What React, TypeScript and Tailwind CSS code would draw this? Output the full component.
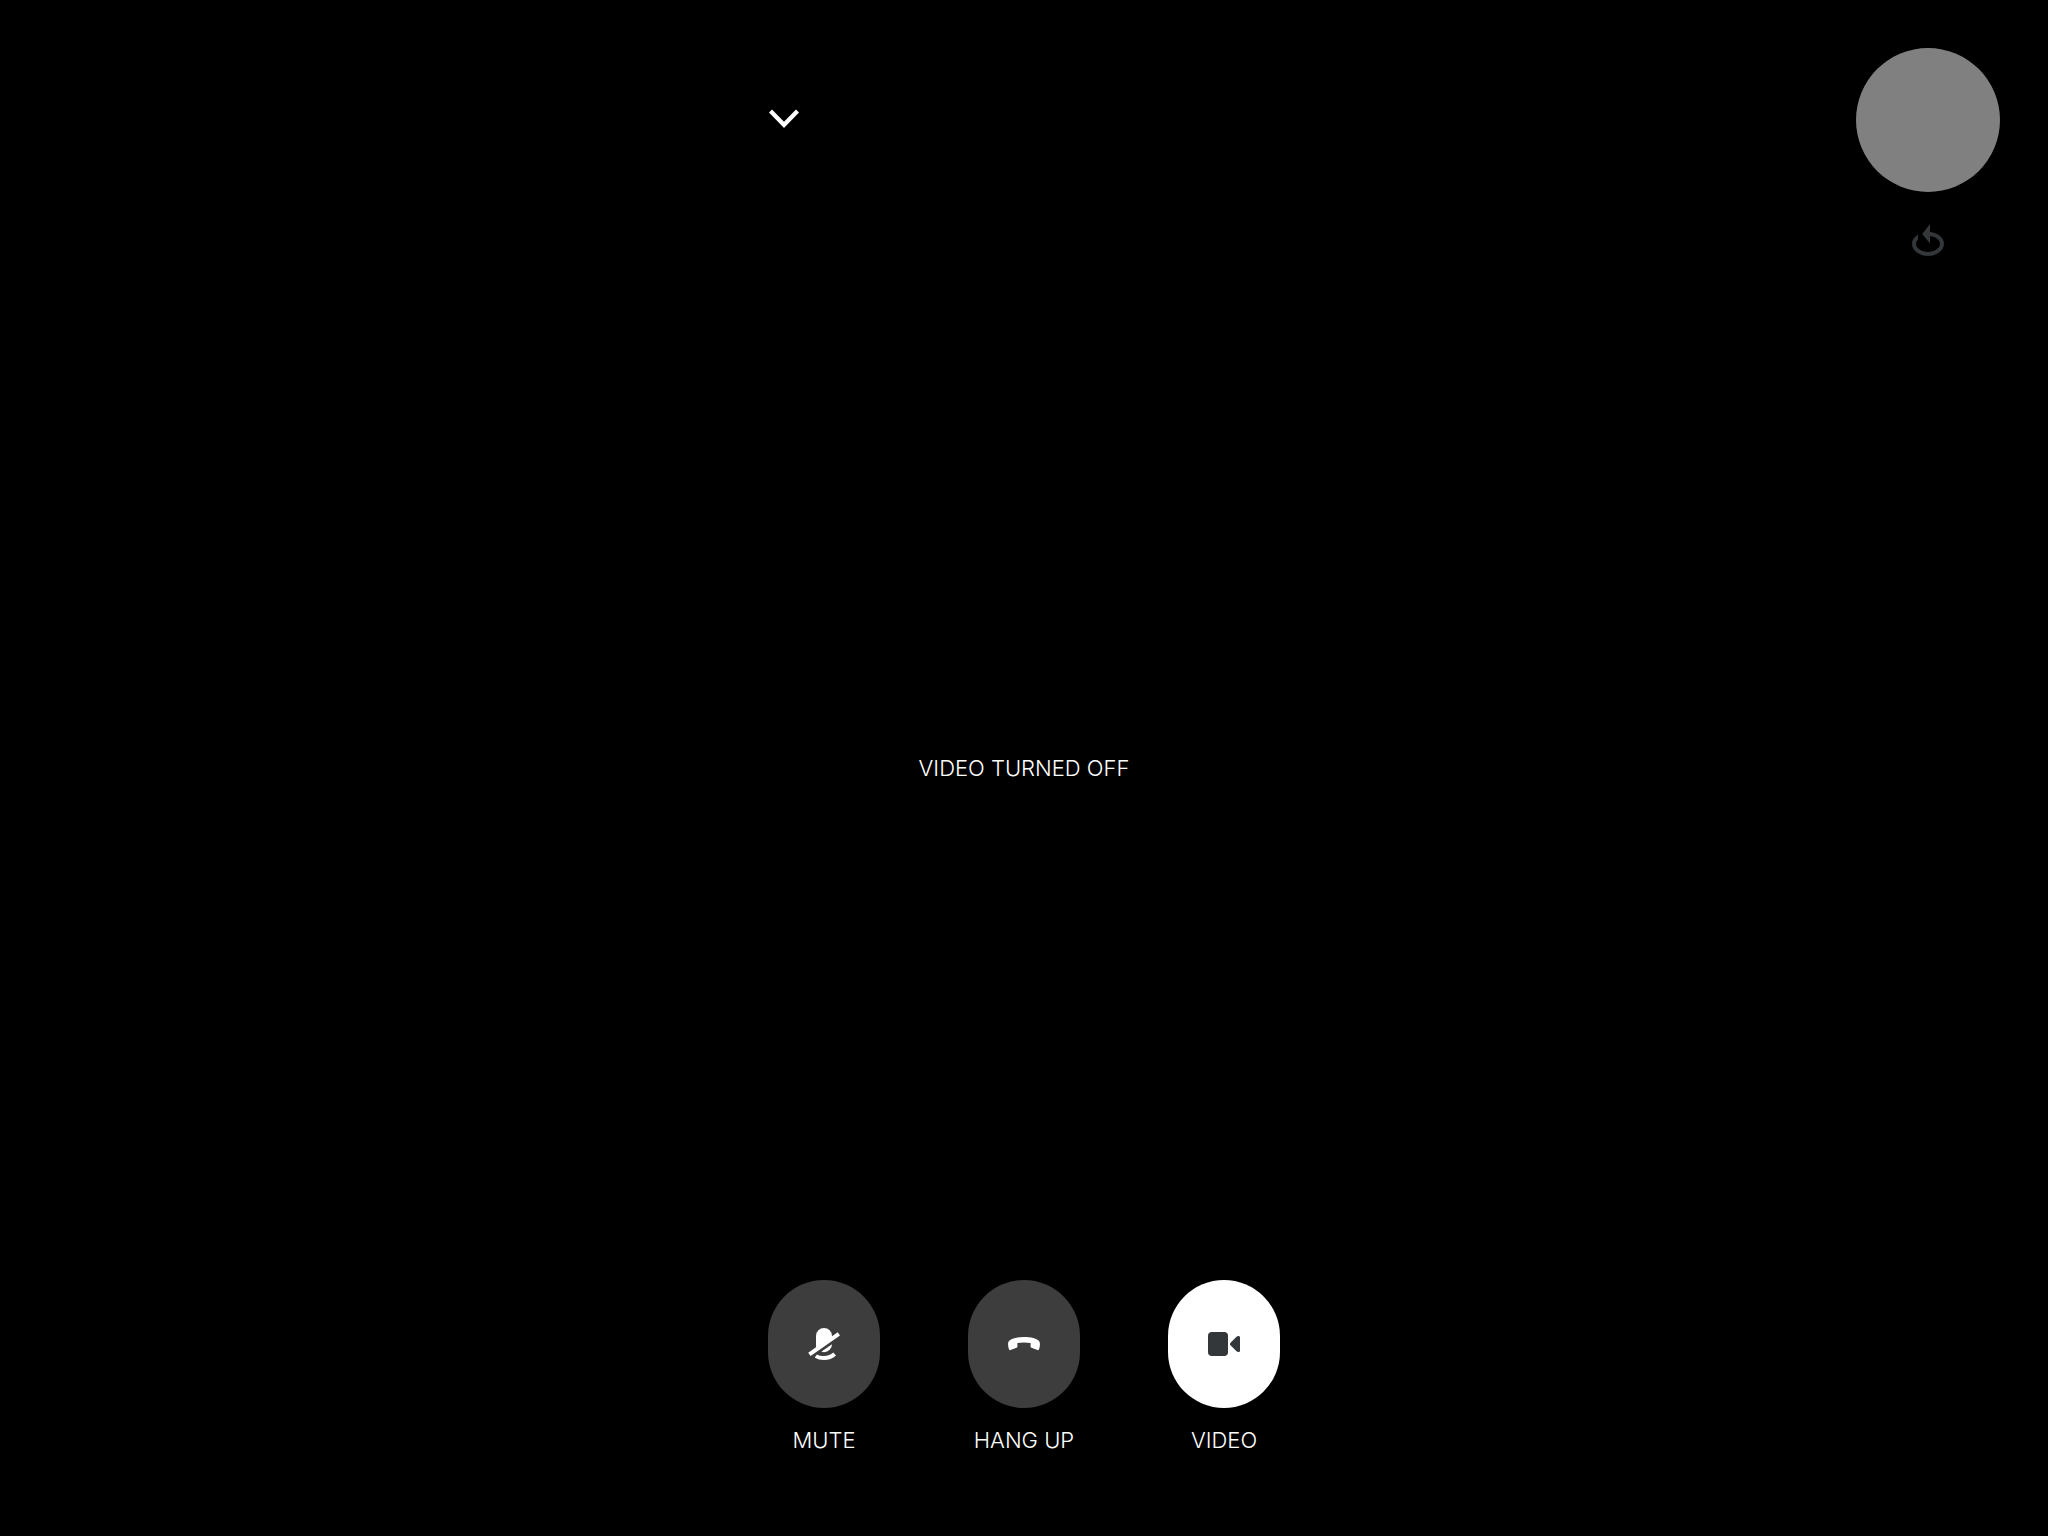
import React from "react";

type IconProps = { children: React.ReactNode };

function Icon({ children }: IconProps) {
  return (
    <svg viewBox="0 0 32 32" className="size-8" fill="currentColor" aria-hidden="true">
      {children}
    </svg>
  );
}

function ChevronIcon() {
  return (
    <Icon>
      <path d="M1 8.6 4 5.6 16 17.8 28 5.6l3 3L16 24z" />
    </Icon>
  );
}

function SwitchCameraIcon() {
  return (
    <Icon>
      <path d="M18 0v8.1c8 .8 14 5.7 14 11.7 0 6.700-7.100 12.200-16 12.200S0 26.500 0 19.800c0-3.700 2.300-7 6-9.300v5.100c-1.300 1.200-2 2.700-2 4.200C4 24.200 9.300 28 16 28s12-3.800 12-8.200c0-3.800-4-6.900-10-7.700v7.300L10.200 9.900z" />
    </Icon>
  );
}

function MicOffIcon() {
  return (
    <Icon>
      <path d="M8 19.300V8a8 8 0 0 1 16 0v.3l5.700-4L32 7.500 2.600 28 .2 24.700z" />
      <path d="M24 16.200A8 8 0 0 1 16 24.200c-.9 0-1.700-.2-2.500-.6z" />
      <path d="M9 26.600c2.100 1 4.300 1.500 7 1.500 3.700 0 6.700-1.200 9.300-3.500l2.700 2.900C24.700 30.500 20.700 32 16 32c-3.500 0-6.700-.8-9.300-2.500z" />
    </Icon>
  );
}

function HangUpIcon() {
  return (
    <Icon>
      <path d="M16 9c7 0 12.500 1.500 14.800 3.700C32.400 14.200 32.200 18.200 31 21.300c-.3.900-.8 1-1.600.7l-6-2.300c-.6-.2-.8-.5-.8-1.200v-3.400C18.500 14.200 13.500 14.200 9.400 15.100v3.400c0 .7-.2 1-.8 1.200l-6 2.300c-.8.3-1.300.2-1.600-.7C-.2 18.200-.4 14.200 1.200 12.700 3.500 10.500 9 9 16 9z" />
    </Icon>
  );
}

function CameraIcon() {
  return (
    <Icon>
      <rect x="0" y="4" width="20" height="24" rx="4" />
      <path d="M22.500 14.700 28.500 8.700C29.100 8.200 29.700 8 30.400 8c1 0 1.600.6 1.600 1.600v12.800c0 1-.6 1.600-1.600 1.600-.7 0-1.300-.2-1.900-.7l-6-6c-.7-.8-.7-1.800 0-2.600z" />
    </Icon>
  );
}

type ControlProps = { label: string; active?: boolean; children: React.ReactNode };

function CallControl({ label, active = false, children }: ControlProps) {
  return (
    <button type="button" aria-pressed={active} className="flex w-28 flex-col items-center gap-4">
      <span
        className={
          active
            ? "flex h-32 w-28 items-center justify-center rounded-[56px] bg-white text-[#33373a]"
            : "flex h-32 w-28 items-center justify-center rounded-[56px] bg-[#3d3d3d] text-white"
        }
      >
        {children}
      </span>
      <span className="whitespace-nowrap leading-8">{label}</span>
    </button>
  );
}

export default function App() {
  return (
    <div className="grid min-h-screen grid-rows-[1fr_auto_1fr] bg-black font-['Inter',sans-serif] text-[22px] font-light text-white">
      <header className="grid grid-cols-[1fr_minmax(0,512px)_1fr] items-start px-12 pt-12">
        <div className="col-start-2 flex h-36 items-center">
          <button type="button" aria-label="Minimize call">
            <ChevronIcon />
          </button>
        </div>
        <div className="flex flex-col items-center gap-8 justify-self-end">
          <div className="size-36 rounded-full bg-[#808080]" />
          <button type="button" aria-label="Switch camera" className="text-[#33373a]">
            <SwitchCameraIcon />
          </button>
        </div>
      </header>

      <main className="text-center leading-8">
        <p>VIDEO TURNED OFF</p>
      </main>

      <footer className="flex items-end justify-center gap-22 pb-20">
        <CallControl label="MUTE">
          <MicOffIcon />
        </CallControl>
        <CallControl label="HANG UP">
          <HangUpIcon />
        </CallControl>
        <CallControl label="VIDEO" active>
          <CameraIcon />
        </CallControl>
      </footer>
    </div>
  );
}
